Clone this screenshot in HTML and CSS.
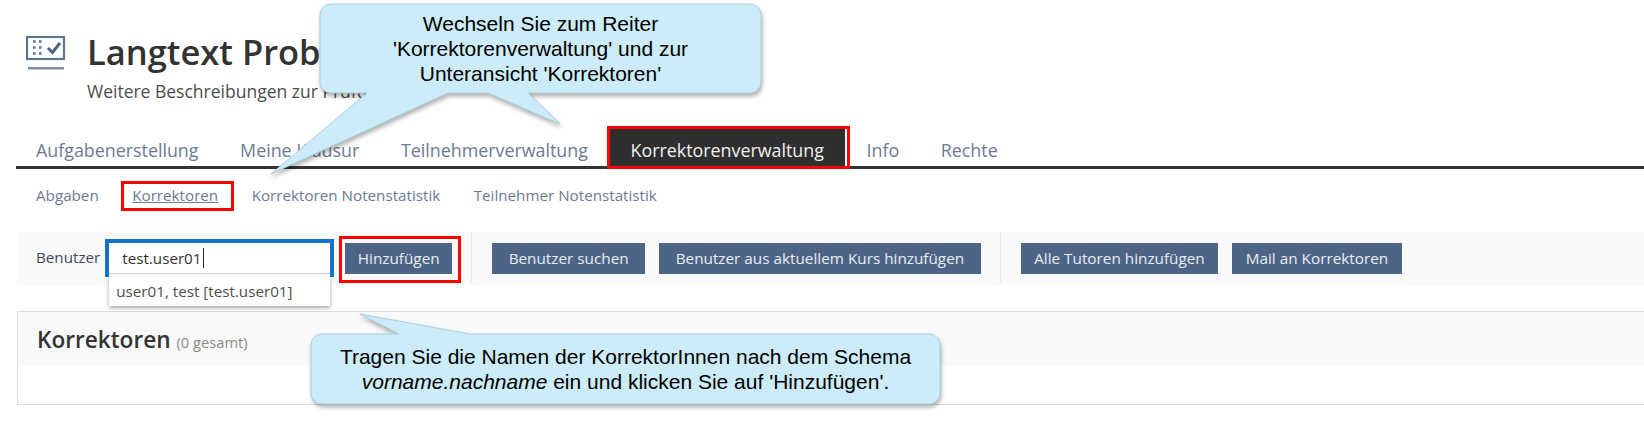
FILE: index.html
```html
<!DOCTYPE html>
<html lang="de">
<head>
    <title>Langtext Probe</title>
    <meta charset="utf-8">
    <link rel="stylesheet" href="styles.css">
</head>
<body>

<div class="header">
    <svg class="header-icon" width="40" height="36" viewBox="0 0 40 36">
        <rect x="1" y="1" width="37" height="22" fill="none" stroke="#5f7490" stroke-width="2.2"/>
        <path d="M7 5.5h2.6M7 11.5h2.6M7 17.5h2.6M13 5.5h2.6M13 11.5h2.6M13 17.5h2.6" stroke="#5f7490" stroke-width="2.6"/>
        <path d="M22 12l4.5 4.500 7.500-9.500" fill="none" stroke="#4d6486" stroke-width="3"/>
        <rect x="2" y="31" width="36" height="2.500" fill="#7d8ea8"/>
    </svg>
    <div class="header-text">
        <h1>Langtext Probeklausur</h1>
        <p>Weitere Beschreibungen zur Prüfung</p>
    </div>
</div>

<ul class="tabs">
    <li>Aufgabenerstellung</li>
    <li>Meine Klausur</li>
    <li>Teilnehmerverwaltung</li>
    <li class="active">Korrektorenverwaltung</li>
    <li>Info</li>
    <li>Rechte</li>
</ul>

<ul class="subtabs">
    <li>Abgaben</li>
    <li class="active">Korrektoren</li>
    <li>Korrektoren Notenstatistik</li>
    <li>Teilnehmer Notenstatistik</li>
</ul>

<div class="toolbar">
    <label class="user-label">Benutzer</label>
    <div class="user-field">
        <div class="user-input">test.user01<span class="caret"></span></div>
        <div class="user-menu">user01, test [test.user01]</div>
    </div>
    <a class="btn btn-first">Hinzufügen</a>
    <span class="sep"></span>
    <a class="btn">Benutzer suchen</a>
    <a class="btn">Benutzer aus aktuellem Kurs hinzufügen</a>
    <span class="sep"></span>
    <a class="btn btn-tight">Alle Tutoren hinzufügen</a>
    <a class="btn btn-tight">Mail an Korrektoren</a>
</div>

<div class="panel">
    <div class="panel-head">
        <h2>Korrektoren</h2> <small>(0 gesamt)</small>
    </div>
</div>

<div class="mark mark-tab"></div>
<div class="mark mark-sub"></div>
<div class="mark mark-add"></div>

<svg class="bubbles" width="1644" height="424" viewBox="0 0 1644 424">
    <path class="bubble" d="M331 4H750a11 11 0 0 1 11 11V82a11 11 0 0 1 -11 11H528L560 124L488 93H448L271 174L367 93H331a11 11 0 0 1 -11 -11V15a11 11 0 0 1 11 -11z"/>
    <path class="bubble" d="M322 334H399L360 314L470 334H929a11 11 0 0 1 11 11V393a11 11 0 0 1 -11 11H322a11 11 0 0 1 -11 -11V345a11 11 0 0 1 11 -11z"/>
</svg>

<div class="note note-top">Wechseln Sie zum Reiter<br>'Korrektorenverwaltung' und zur<br>Unteransicht 'Korrektoren'</div>
<div class="note note-bottom">Tragen Sie die Namen der KorrektorInnen nach dem Schema<br><em>vorname.nachname</em> ein und klicken Sie auf 'Hinzufügen'.</div>

</body>
</html>
```

FILE: styles.css
```css
html {
    height: 100%;
}
body {
    margin: 0;
    height: 424px;
    overflow: hidden;
    background: #fff;
    color: #4c5d75;
    font-family: "Open Sans", sans-serif;
    font-size: 15.2px;
    position: relative;
}

.header {
    display: flex;
    height: 128px;
    padding-left: 26px;
    box-sizing: border-box;
}
.header-icon {
    margin-top: 36px;
}
.header-text {
    margin-left: 21px;
}
h1 {
    margin: 30px 0 0;
    font-size: 34.5px;
    line-height: 44px;
    font-weight: 600;
    color: #333;
    white-space: nowrap;
}
.header-text p {
    margin: 5px 0 0;
    font-size: 17.5px;
    line-height: 24px;
    color: #4d4d4d;
}

.tabs {
    display: flex;
    list-style: none;
    margin: 0 0 0 16px;
    padding: 0;
    height: 38px;
    border-bottom: 3px solid #333;
    font-size: 17.85px;
    color: #6b7b93;
}
.tabs li {
    padding: 0 20.8px;
    line-height: 44px;
    height: 38px;
    white-space: nowrap;
}
.tabs li:first-child {
    padding-left: 20px;
}
.tabs li.active {
    background: #2f2f2f;
    color: #f2f2f2;
    border-left: 1px solid #fff;
    border-right: 1px solid #fff;
}

.subtabs {
    display: flex;
    gap: 33.5px;
    list-style: none;
    margin: 0;
    padding: 0 0 0 36px;
    height: 63px;
    box-sizing: border-box;
    font-size: 15.2px;
    line-height: 53px;
    color: #6b7b93;
}
.subtabs .active {
    text-decoration: underline;
}

.toolbar {
    display: flex;
    align-items: flex-start;
    height: 53px;
    margin-left: 17px;
    background: #f9f9f9;
}
.user-label {
    margin: 14px 5px 0 19px;
    line-height: 22px;
    color: #3d4a5c;
}
.user-field {
    width: 229px;
    margin-top: 7px;
    position: relative;
}
.user-input {
    box-sizing: border-box;
    height: 38px;
    padding: 0 13px;
    line-height: 31px;
    font-size: 15.2px;
    color: #333;
    background: #fff;
    border: 4px solid #1273c9;
    border-bottom: 0;
    box-shadow: inset 0 -3px 0 #fff, inset 0 -4px 0 #c5cfdc;
}
.caret {
    display: inline-block;
    width: 1px;
    height: 20px;
    margin-left: 1px;
    vertical-align: -4px;
    background: #222;
}
.user-menu {
    position: absolute;
    left: 4px;
    right: 4px;
    top: 38px;
    height: 29px;
    padding-left: 7px;
    line-height: 29px;
    background: #fff;
    color: #4d4d4d;
    box-shadow: 0 2px 4px rgba(0,0,0,0.35);
}
.btn {
    margin: 11px 14px 0 0;
    padding: 0 16.5px;
    height: 31px;
    line-height: 31px;
    font-size: 15.3px;
    background: #4d6486;
    color: #e9edf2;
    white-space: nowrap;
}
.btn-first {
    margin-left: 11px;
    margin-right: 19px;
    padding: 0 12.5px;
}
.btn-tight {
    padding: 0 13.5px;
}
.sep {
    width: 1px;
    height: 50px;
    background: #e6e6e6;
    margin-right: 20px;
}
.btn + .sep {
    margin-left: 5px;
}
.btn-first + .sep {
    margin-left: 0;
}

.panel {
    margin: 26px 0 0 17px;
    height: 94px;
    box-sizing: border-box;
    border: 1px solid #ddd;
    border-right: 0;
    background: #fff;
}
.panel-head {
    height: 53px;
    padding-left: 19px;
    background: #f9f9f9;
    line-height: 56px;
}
h2 {
    display: inline;
    font-size: 22.6px;
    font-weight: 600;
    color: #333;
}
small {
    font-size: 14.7px;
    color: #8a8a8a;
    margin-left: 2px;
}

/* red highlight frames */
.mark {
    position: absolute;
    box-sizing: border-box;
    border: 3px solid #f00;
}
.mark-tab {
    left: 607px;
    top: 126px;
    width: 243px;
    height: 43px;
}
.mark-sub {
    left: 121px;
    top: 181px;
    width: 113px;
    height: 30px;
}
.mark-add {
    left: 339px;
    top: 236px;
    width: 122px;
    height: 47px;
}

/* callouts */
.bubbles {
    position: absolute;
    left: 0;
    top: 0;
}
.bubble {
    fill: #cbecf8;
    stroke: #a9cfdc;
    stroke-width: 1;
    filter: drop-shadow(1px 3px 2px rgba(0,0,0,0.3));
}
.note {
    position: absolute;
    font-family: "Liberation Sans", sans-serif;
    font-size: 21px;
    line-height: 25px;
    color: #000;
    text-align: center;
}
.note-top {
    left: 320px;
    top: 11px;
    width: 441px;
}
.note-bottom {
    left: 311px;
    top: 344px;
    width: 629px;
}
```
